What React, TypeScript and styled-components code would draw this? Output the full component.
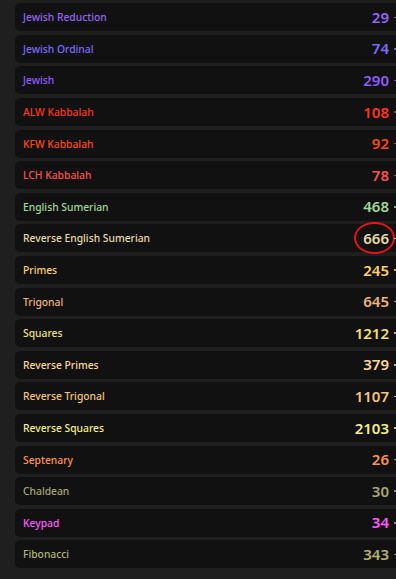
import React from "react";
import styled, {createGlobalStyle} from "styled-components";

interface ICipher {
    name: string;
    value: number;
    color: string;
    marked?: boolean;
}

const ciphers: ICipher[] = [
    {name: "Jewish Reduction", value: 29, color: "#9467f2"},
    {name: "Jewish Ordinal", value: 74, color: "#7c6cff"},
    {name: "Jewish", value: 290, color: "#8d5eff"},
    {name: "ALW Kabbalah", value: 108, color: "#ff3719"},
    {name: "KFW Kabbalah", value: 92, color: "#ff4a0a"},
    {name: "LCH Kabbalah", value: 78, color: "#ff4f4f"},
    {name: "English Sumerian", value: 468, color: "#a3d89b"},
    {name: "Reverse English Sumerian", value: 666, color: "#eadba6", marked: true},
    {name: "Primes", value: 245, color: "#ffd06e"},
    {name: "Trigonal", value: 645, color: "#f0b47a"},
    {name: "Squares", value: 1212, color: "#f2e07a"},
    {name: "Reverse Primes", value: 379, color: "#ffd89a"},
    {name: "Reverse Trigonal", value: 1107, color: "#f8c57a"},
    {name: "Reverse Squares", value: 2103, color: "#f6f08a"},
    {name: "Septenary", value: 26, color: "#ff9450"},
    {name: "Chaldean", value: 30, color: "#a8a872"},
    {name: "Keypad", value: 34, color: "#ff5cff"},
    {name: "Fibonacci", value: 343, color: "#b4b270"},
];

const GlobalStyle = createGlobalStyle`
  html, body {
    margin: 0;
    padding: 0;
    background: #1f1f1f;
    overflow: hidden;
  }
`;

export default function App() {
    return (
        <>
            <GlobalStyle />
            <PageStyle>
                <ListStyle>
                    {ciphers.map((c) => (
                        <RowStyle key={c.name} $color={c.color}>
                            <LabelStyle>{c.name}</LabelStyle>
                            <RightStyle>
                                <ValueStyle>
                                    {c.value}
                                    {c.marked && <MarkStyle />}
                                </ValueStyle>
                                <DashStyle />
                            </RightStyle>
                        </RowStyle>
                    ))}
                </ListStyle>
            </PageStyle>
        </>
    );
}

const PageStyle = styled.div`
  width: 396px;
  height: 579px;
  overflow: hidden;
  box-sizing: border-box;
  padding: 3.3px 0 0 15px;
  font-family: "Noto Sans", "Open Sans", sans-serif;
`;

const ListStyle = styled.div`
  display: flex;
  flex-direction: column;
  gap: 3.6px;
  width: 400px;
`;

const RowStyle = styled.div<{ $color: string }>`
  height: 28px;
  display: flex;
  align-items: center;
  justify-content: space-between;
  box-sizing: border-box;
  padding: 0 16px 0 8px;
  background: #111111;
  border-radius: 5px;
  color: ${(p) => p.$color};
`;

const LabelStyle = styled.div`
  font-size: 10.3px;
  font-weight: 500;
  white-space: nowrap;
`;

const RightStyle = styled.div`
  display: flex;
  align-items: center;
`;

const ValueStyle = styled.div`
  position: relative;
  font-size: 15px;
  font-weight: 600;
  line-height: 1;
`;

const MarkStyle = styled.span`
  position: absolute;
  left: -9px;
  right: -6px;
  top: -9px;
  bottom: -8px;
  border: 2px solid #e4141a;
  border-radius: 50%;
`;

const DashStyle = styled.span`
  width: 5px;
  height: 1.5px;
  margin-left: 5px;
  background: currentColor;
  opacity: 0.8;
`;
